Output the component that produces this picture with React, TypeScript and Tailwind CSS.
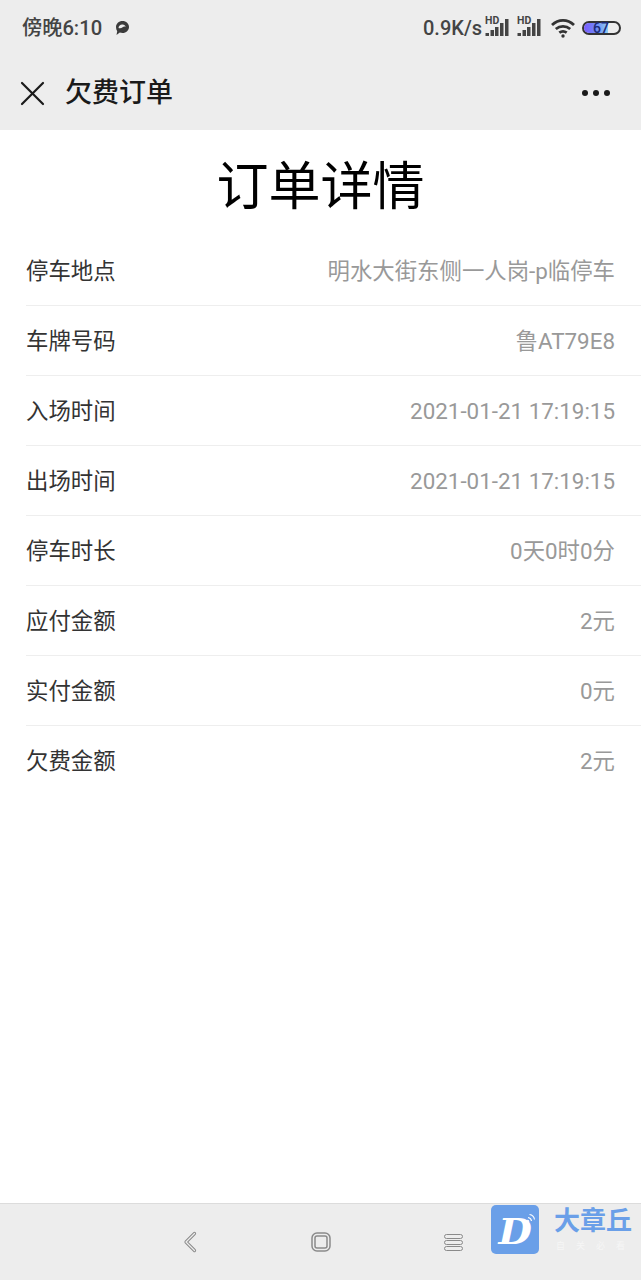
import React from 'react';

const rows = [
  { label: '停车地点', value: '明水大街东侧一人岗-p临停车' },
  { label: '车牌号码', value: '鲁AT79E8' },
  { label: '入场时间', value: '2021-01-21 17:19:15' },
  { label: '出场时间', value: '2021-01-21 17:19:15' },
  { label: '停车时长', value: '0天0时0分' },
  { label: '应付金额', value: '2元' },
  { label: '实付金额', value: '0元' },
  { label: '欠费金额', value: '2元' },
];

const font = "font-['Roboto','Noto_Sans_CJK_SC',sans-serif]";

function Signal() {
  return (
    <div className="relative w-[24px] h-[20px]">
      <span className="absolute left-[1px] top-[-2px] text-[10.5px] leading-[10px] font-bold text-[#444]">HD</span>
      <svg width="25" height="20" viewBox="0 0 25 20" className="absolute left-0 top-0" fill="#444">
        <rect x="1.500" y="15" width="3.500" height="3" />
        <rect x="6.500" y="12" width="3.500" height="6" />
        <rect x="11" y="9" width="3.500" height="9" />
        <rect x="16" y="5" width="3.500" height="13" />
        <rect x="21" y="1" width="3.500" height="17" />
      </svg>
    </div>
  );
}

function StatusBar() {
  return (
    <div className="h-[56px] flex items-center justify-between pl-[22px] pr-[20px] text-[#444]">
      <div className="flex items-center gap-[12px]">
        <span className="text-[20.200px] font-medium leading-none">傍晚6:10</span>
        <svg width="16" height="16" viewBox="0 0 16 16">
          <path d="M8.500 1C12.200 1 15 3.700 15 7s-2.800 6-6.500 6c-1 0-1.900-.2-2.700-.5L2.500 15l.7-3.700C2.400 10.100 2 8.600 2 7c0-3.300 2.800-6 6.500-6z" fill="#3c3c3c" />
          <path d="M4.500 8C4.700 5.600 6.500 4.200 8.500 4.400c1.700.2 2.900 1.200 3.300 2.400-1.400-.5-2.300-.2-3.200.5C7.500 8.200 6 8.800 4.500 8z" fill="#ededed" />
        </svg>
      </div>
      <div className="flex items-center">
        <span className="text-[20px] font-medium leading-none">0.9K/s</span>
        <div className="ml-[2px]"><Signal /></div>
        <div className="ml-[8px]"><Signal /></div>
        <svg className="ml-[10px]" width="26" height="20" viewBox="0 0 26 20" fill="none" stroke="#333" strokeWidth="2.800">
          <path d="M2 7C8.500 .8 17.500 .8 24 7" />
          <path d="M5.800 11c4.200-3.600 10.200-3.600 14.400 0" />
          <path d="M9.300 14.700c2.200-1.600 5.200-1.600 7.400 0" />
          <circle cx="13" cy="18" r="1.700" fill="#333" stroke="none" />
        </svg>
        <div className="relative ml-[6px] w-[39px] h-[14px] rounded-full border-2 border-[#333] flex">
          <div className="w-[24px] h-full rounded-l-full bg-[linear-gradient(90deg,#7a5cff,#6f8cf5_55%,#8fd0f5)]" />
          <span className="absolute left-[9px] top-[-2px] text-[14px] leading-[14px] font-medium text-[#1c2a7a]">67</span>
        </div>
      </div>
    </div>
  );
}

function NavBar() {
  return (
    <div className="h-[74px] flex items-center justify-between pl-[19px] pr-[31px]">
      <div className="flex items-center">
        <svg width="27" height="27" viewBox="0 0 27 27" fill="none" stroke="#1a1a1a" strokeWidth="2.200" strokeLinecap="round">
          <path d="M3 3l21 21" />
          <path d="M24 3L3 24" />
        </svg>
        <span className="ml-[19px] text-[27px] leading-none font-medium text-[#1a1a1a]">欠费订单</span>
      </div>
      <div className="flex gap-[5px]">
        <span className="w-[6px] h-[6px] rounded-full bg-[#1a1a1a]" />
        <span className="w-[6px] h-[6px] rounded-full bg-[#1a1a1a]" />
        <span className="w-[6px] h-[6px] rounded-full bg-[#1a1a1a]" />
      </div>
    </div>
  );
}

function Watermark() {
  return (
    <div className="absolute left-[491px] top-[1205px] flex">
      <div className="relative w-[48px] h-[49px] rounded-[5px] bg-[#6a9fe8] flex items-center justify-center">
        <span className="italic font-['DejaVu_Serif',serif] font-bold text-[35px] leading-none text-white mt-[4px] ml-[1px] scale-x-110">D</span>
        <svg className="absolute right-[3px] top-[8px]" width="11" height="11" viewBox="0 0 11 11" fill="none" stroke="#fff" strokeWidth="1.100">
          <circle cx="2.500" cy="8.500" r="1.300" />
          <path d="M3 4.500a4 4 0 0 1 3.500 3.500" />
          <path d="M4.500 1.500a6 6 0 0 1 5 5" />
        </svg>
      </div>
      <div className="ml-[15px] flex flex-col">
        <span className="text-[26px] leading-[34px] font-bold text-[#6a9fe8] mt-[-1px]">大章丘</span>
        <span className="mt-[3px] pl-[2px] text-[9px] leading-[10px] tracking-[11px] text-[#f6f6f6] whitespace-nowrap">自关必看</span>
      </div>
    </div>
  );
}

export default function App() {
  return (
    <div className={`relative w-[641px] h-[1280px] bg-white flex flex-col overflow-hidden ${font}`}>
      <div className="bg-[#ededed]">
        <StatusBar />
        <NavBar />
      </div>

      <h1 className="mt-[28px] h-[60px] text-center text-[52px] leading-[60px] font-normal text-black">订单详情</h1>

      <div className="mt-[18px] pl-[26px]">
        {rows.map((row, i) => (
          <div
            key={row.label}
            className={`h-[70px] flex items-center justify-between pr-[26px] text-[22.400px] ${i < rows.length - 1 ? 'pt-[2px] border-b border-[#eeeeee]' : 'pt-[1px]'}`}
          >
            <span className="text-[#333]">{row.label}</span>
            <span className="text-[#999]">{row.value}</span>
          </div>
        ))}
      </div>

      <div className="mt-auto h-[77px] bg-[#ededed] border-t border-[#dcdcdc] flex items-center">
        <svg className="ml-[183px]" width="14" height="22" viewBox="0 0 14 22" fill="none" strokeLinecap="round" strokeLinejoin="round">
          <path d="M11.500 2.500L3 11l8.500 8.500" stroke="#8a8a8a" strokeWidth="3.200" />
          <path d="M11.500 2.500L3 11l8.500 8.500" stroke="#ededed" strokeWidth="1.300" />
        </svg>
        <svg className="ml-[114px]" width="20" height="20" viewBox="0 0 20 20" fill="none" stroke="#8a8a8a" strokeWidth="1.500">
          <rect x="1" y="1" width="18" height="18" rx="5" />
          <rect x="4" y="4" width="12" height="12" rx="2" />
        </svg>
        <div className="ml-[113px] flex flex-col gap-[1px]">
          <span className="w-[19px] h-[5px] rounded-full border border-[#8a8a8a]" />
          <span className="w-[19px] h-[5px] rounded-full border border-[#8a8a8a]" />
          <span className="w-[19px] h-[5px] rounded-full border border-[#8a8a8a]" />
        </div>
      </div>

      <Watermark />
    </div>
  );
}
